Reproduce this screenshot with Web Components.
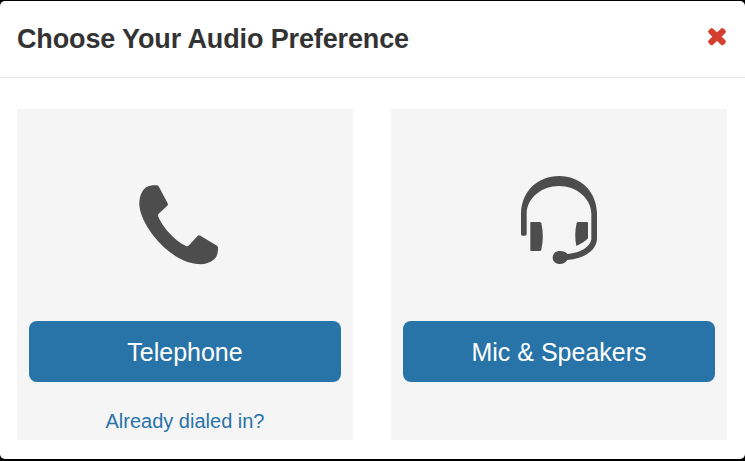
<!DOCTYPE html>
<html lang="en">
<head>
<meta charset="utf-8">
<title>Audio Preference</title>
<style>
  html, body {
    height: 100%;
  }

  body {
    margin: 0;
    background: #000;
    overflow: hidden;
    font-family: "Liberation Sans", Arial, sans-serif;
  }
</style>
</head>
<body>
<audio-dialog>
  <span slot="title">Choose Your Audio Preference</span>
  <audio-option icon="phone">
    Telephone
    <a slot="link" href="#">Already dialed in?</a>
  </audio-option>
  <audio-option icon="headset">Mic &amp; Speakers</audio-option>
</audio-dialog>

<script>
const icons = {
  phone: `
    <svg viewBox="0 -16 330 330">
      <path d="M82 45Q85 46 87 50L113 99Q115 103 112 106L86 130Q83 133 84 137C98 172 134 211 168 227Q173 229 177 225L202 198Q206 193 211 196L261 226Q265 229 264 234C264 250 260 262 250 269C237 279 222 283 201 281C152 276 105 240 70 196C47 167 30 132 28 105C27 76 38 57 50 50C60 44 71 44 82 45Z"/>
    </svg>`,
  headset: `
    <svg viewBox="-18 0 330 330">
      <path d="M33 206V145C35 78 84 33 147 33C211 33 259 78 261 145V222C259 257 222 281 172 285C166 293 160 297 150 297C137 297 128 288 128 278C128 266 137 258 150 258C160 258 168 261 173 267C213 264 241 245 244 223V145C242 99 199 63 147 63C95 63 51 99 50 145V207Q50 212 45 212H37Q33 212 33 206Z"/>
      <path d="M63 171H89Q93 171 94 175C100 201 100 228 94 254Q93 258 89 258H63Q61 258 61 255V174Q61 171 63 171Z"/>
      <path d="M205 171H231Q234 171 234 174V220C225 230 213 237 199 243C194 219 195 196 200 175Q201 171 205 171Z"/>
    </svg>`
};

class AudioDialog extends HTMLElement {
  constructor() {
    super();
    const shadow = this.attachShadow({ mode: "open" });
    shadow.innerHTML = `
      <style>
      :host {
        display: flex;
        flex-direction: column;
        box-sizing: border-box;
        height: 458px;
        margin-top: 1px;
        background: #fff;
        border-radius: 5px;
      }

      header {
        display: flex;
        align-items: center;
        justify-content: space-between;
        box-sizing: border-box;
        height: 77px;
        padding: 0 18px 2px 17px;
        border-bottom: 1px solid #e5e5e5;
      }

      h1 {
        margin: 2px 0 0;
        font-size: 27px;
        line-height: 32px;
        letter-spacing: -0.13px;
        color: #333;
      }

      close-button {
        margin-bottom: 3px;
      }

      main {
        display: flex;
        gap: 38px;
        padding: 31px 18px 19px 17px;
        flex: 1;
      }
      </style>
      <header>
        <h1><slot name="title"></slot></h1>
        <close-button></close-button>
      </header>
      <main><slot></slot></main>
    `;
  }
}

class CloseButton extends HTMLElement {
  constructor() {
    super();
    const shadow = this.attachShadow({ mode: "open" });
    shadow.innerHTML = `
      <style>
      :host {
        display: block;
      }

      button {
        display: block;
        border: 0;
        padding: 0;
        background: none;
        cursor: pointer;
      }

      svg {
        display: block;
        width: 20px;
        height: 20px;
        fill: #d3402f;
      }
      </style>
      <button aria-label="Close">
        <svg viewBox="0 0 60 60">
          <path d="M10 5Q14 1 18 5L30 16L42 5Q46 1 50 5L55 10Q59 14 55 18L44 29L55 40Q59 44 55 48L50 53Q46 57 42 53L30 42L18 53Q14 57 10 53L5 48Q1 44 5 40L16 29L5 18Q1 14 5 10Z"/>
        </svg>
      </button>
    `;
  }
}

class AudioOption extends HTMLElement {
  constructor() {
    super();
    const shadow = this.attachShadow({ mode: "open" });
    shadow.innerHTML = `
      <style>
      :host {
        display: flex;
        flex: 1;
        flex-direction: column;
        align-items: center;
        box-sizing: border-box;
        padding: 56px 12px 0;
        background: #f5f5f5;
      }

      svg {
        display: block;
        width: 110px;
        height: 110px;
        margin-bottom: 46px;
        fill: #4d4d4d;
      }

      button {
        width: 100%;
        height: 61px;
        border: 0;
        border-radius: 8px;
        padding: 2px 0 0;
        background: #2873a8;
        color: #fff;
        font: 25px/29px "Liberation Sans", Arial, sans-serif;
        cursor: pointer;
      }

      ::slotted(a) {
        margin-top: 27px;
        color: #2873a8;
        font-size: 20px;
        line-height: 24px;
        text-decoration: none;
      }
      </style>
      ${icons[this.getAttribute("icon")]}
      <button><slot></slot></button>
      <slot name="link"></slot>
    `;
  }
}

customElements.define("close-button", CloseButton);
customElements.define("audio-option", AudioOption);
customElements.define("audio-dialog", AudioDialog);
</script>
</body>
</html>
